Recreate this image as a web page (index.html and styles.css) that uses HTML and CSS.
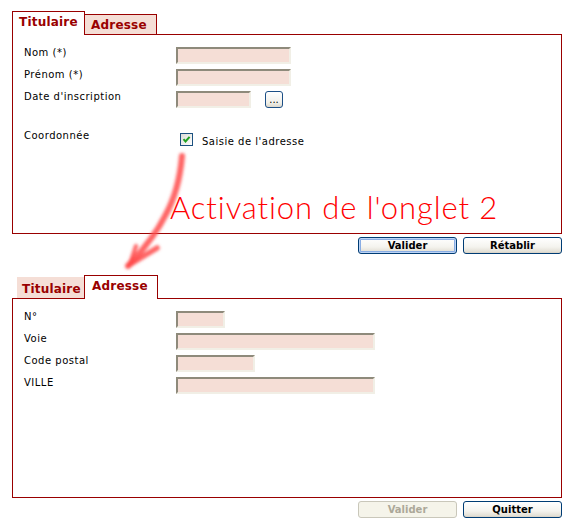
FILE: index.html
```html
<!DOCTYPE html>
<html lang="fr">
<head>
<meta charset="utf-8">
<title>Onglets</title>
<link rel="stylesheet" href="styles.css">
</head>
<body>
<div class="page">
  <section class="form">
    <div class="tabs">
      <div class="tab active w-tit">Titulaire</div>
      <div class="tab inactive bordered w-adr">Adresse</div>
    </div>
    <div class="panel">
      <div class="fields">
        <label class="lbl">Nom (*)</label><span class="inp w115"></span>
        <label class="lbl">Prénom (*)</label><span class="inp w115"></span>
        <label class="lbl">Date d'inscription</label>
        <div class="date"><span class="inp w75"></span><span class="dots">...</span></div>
      </div>
      <div class="coord">
        <label class="lbl">Coordonnée</label>
        <div class="check">
          <span class="box"><svg width="11" height="11" viewBox="0 0 11 11"><path d="M2.5 5.2 L4.5 7.4 L8.6 2.8" fill="none" stroke="#21a121" stroke-width="2"/></svg></span>
          <span class="lbl">Saisie de l'adresse</span>
        </div>
      </div>
    </div>
    <div class="actions">
      <button class="btn default">Valider</button>
      <button class="btn">Rétablir</button>
    </div>
  </section>

  <section class="form second">
    <div class="tabs">
      <div class="tab inactive plain w-tit2">Titulaire</div>
      <div class="tab active w-adr2">Adresse</div>
    </div>
    <div class="panel">
      <div class="fields">
        <label class="lbl">N°</label><span class="inp w49"></span>
        <label class="lbl">Voie</label><span class="inp w199"></span>
        <label class="lbl">Code postal</label><span class="inp w79"></span>
        <label class="lbl">VILLE</label><span class="inp w199"></span>
      </div>
    </div>
    <div class="actions">
      <button class="btn" disabled>Valider</button>
      <button class="btn">Quitter</button>
    </div>
  </section>

  <div class="annotation">Activation de l'onglet 2</div>
  <svg class="arrow" width="574" height="528" viewBox="0 0 574 528">
    <defs>
      <filter id="soft" x="-20%" y="-20%" width="140%" height="140%">
        <feGaussianBlur stdDeviation="1.6"/>
      </filter>
    </defs>
    <g filter="url(#soft)" fill="none" stroke="#ff4a4a" stroke-linecap="round" stroke-opacity="0.85">
      <path d="M182 156 C180 180 174 200 165 216 C156 234 143 250 128 266" stroke-width="6"/>
      <path d="M129 265 L157 248" stroke-width="5.5"/>
      <path d="M130 264 L136 246" stroke-width="4"/>
    </g>
  </svg>
</div>
</body>
</html>
```

FILE: styles.css
```css
html, body {
  margin: 0;
  padding: 0;
  background: #ffffff;
}

body {
  font-family: "DejaVu Sans", Verdana, sans-serif;
  font-size: 10px;
  color: #000000;
}

.page {
  position: relative;
  width: 574px;
  height: 528px;
  padding-top: 11px;
  box-sizing: border-box;
}

.form {
  width: 550px;
  margin-left: 12px;
}

.form.second {
  margin-top: 21px;
}

.tabs {
  display: flex;
  align-items: flex-end;
  height: 24px;
  margin-bottom: -1px;
  position: relative;
  z-index: 1;
}

.tab {
  box-sizing: border-box;
  font-weight: bold;
  font-size: 12px;
  line-height: 14px;
  letter-spacing: 0.2px;
  color: #990000;
  padding-left: 6px;
  white-space: nowrap;
}

.tab.active {
  height: 24px;
  background: #ffffff;
  border: 1px solid #990000;
  border-bottom: none;
  padding-top: 3px;
}

.tab.inactive {
  background: #f5ded6;
  margin-bottom: 1px;
}

.tab.bordered {
  height: 20px;
  border-top: 1px solid #990000;
  border-right: 1px solid #990000;
  padding-top: 3px;
}

.tab.plain {
  height: 21px;
  padding-top: 5px;
  margin-left: 5px;
}

.w-tit { width: 73px; }
.w-adr { width: 72px; padding-left: 6px; }
.w-tit2 { width: 67px; padding-left: 5px; }
.w-adr2 { width: 74px; padding-left: 7px; }

.panel {
  box-sizing: border-box;
  height: 200px;
  border: 1px solid #990000;
  padding: 12px 0 0 11px;
  background: #ffffff;
}

.fields,
.coord {
  display: grid;
  grid-template-columns: 152px auto;
  row-gap: 5px;
  align-items: start;
}

.coord {
  margin-top: 22px;
}

.lbl {
  font-size: 10px;
  line-height: 12px;
  letter-spacing: 0.5px;
  white-space: nowrap;
}

.inp {
  display: block;
  box-sizing: border-box;
  height: 17px;
  background: #f5ded6;
  border-top: 2px solid #8e8a7b;
  border-left: 2px solid #8e8a7b;
  border-right: 2px solid #f1efe6;
  border-bottom: 2px solid #f1efe6;
}

.w115 { width: 115px; }
.w75 { width: 75px; }
.w49 { width: 49px; }
.w79 { width: 79px; }
.w199 { width: 199px; }

.date {
  display: flex;
  gap: 14px;
}

.dots {
  box-sizing: border-box;
  width: 18px;
  height: 17px;
  border: 1px solid #1c4f86;
  border-radius: 3px;
  background: linear-gradient(#ffffff, #f1f0ea 70%, #dcd8cc);
  font-size: 10px;
  line-height: 15px;
  text-align: center;
  letter-spacing: 0;
}

.check {
  display: flex;
  align-items: flex-end;
  gap: 9px;
  margin-top: 3px;
  margin-left: 4px;
}

.box {
  box-sizing: border-box;
  width: 13px;
  height: 13px;
  border: 1px solid #1c5180;
  background: linear-gradient(135deg, #dcdcd7, #ffffff);
  display: flex;
  align-items: center;
  justify-content: center;
}

.box svg {
  display: block;
}

.check .lbl {
  line-height: 12px;
  margin-bottom: -2px;
}

.actions {
  display: flex;
  justify-content: flex-end;
  gap: 6px;
  margin-top: 3px;
}

.btn {
  box-sizing: border-box;
  width: 99px;
  height: 17px;
  padding: 0;
  margin: 0;
  font-family: "DejaVu Sans", Verdana, sans-serif;
  font-size: 10px;
  font-weight: bold;
  line-height: 14px;
  color: #000000;
  border: 1px solid #003c74;
  border-radius: 3px;
  background: linear-gradient(#ffffff, #f4f3ee 60%, #e3e0d6 90%, #d6d0c5);
}

.btn.default {
  box-shadow: inset 0 0 0 1px #bcd4f6, inset 0 0 0 2px #89ade4;
}

.btn:disabled {
  color: #aca899;
  border-color: #c9c7ba;
  background: #f5f4ea;
}

.annotation {
  position: absolute;
  left: 170px;
  top: 189px;
  font-family: Lato, "DejaVu Sans", sans-serif;
  font-weight: 300;
  font-size: 31px;
  line-height: 36px;
  letter-spacing: 0.9px;
  color: #ff0000;
  white-space: nowrap;
}

.arrow {
  position: absolute;
  left: 0;
  top: 0;
  pointer-events: none;
}
```
